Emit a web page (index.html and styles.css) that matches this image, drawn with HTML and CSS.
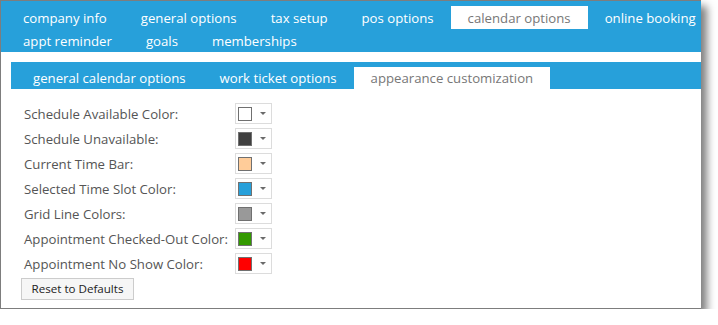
FILE: index.html
```html
<!DOCTYPE html>
<html lang="en">
<head>
    <meta charset="utf-8" />
    <title>Calendar Options</title>
    <link rel="stylesheet" href="styles.css">
</head>
<body>
    <div class="window">
        <!-- onglets principaux -->
        <nav class="mainTabs">
            <div class="tabRow">
                <a class="tab">company info</a>
                <a class="tab">general options</a>
                <a class="tab">tax setup</a>
                <a class="tab">pos options</a>
                <a class="tab active">calendar options</a>
                <a class="tab">online booking</a>
            </div>
            <div class="tabRow">
                <a class="tab">appt reminder</a>
                <a class="tab">goals</a>
                <a class="tab">memberships</a>
            </div>
        </nav>

        <div class="content">
            <nav class="subTabs">
                <a class="subTab">general calendar options</a>
                <a class="subTab">work ticket options</a>
                <a class="subTab active">appearance customization</a>
            </nav>

            <div class="colorForm">
                <div class="colorRow">
                    <label>Schedule Available Color:</label>
                    <span class="picker"><span class="swatch swWhite"></span><span class="caret"></span></span>
                </div>
                <div class="colorRow">
                    <label>Schedule Unavailable:</label>
                    <span class="picker"><span class="swatch swDark"></span><span class="caret"></span></span>
                </div>
                <div class="colorRow">
                    <label>Current Time Bar:</label>
                    <span class="picker"><span class="swatch swPeach"></span><span class="caret"></span></span>
                </div>
                <div class="colorRow">
                    <label>Selected Time Slot Color:</label>
                    <span class="picker"><span class="swatch swBlue"></span><span class="caret"></span></span>
                </div>
                <div class="colorRow">
                    <label>Grid Line Colors:</label>
                    <span class="picker"><span class="swatch swGray"></span><span class="caret"></span></span>
                </div>
                <div class="colorRow">
                    <label>Appointment Checked-Out Color:</label>
                    <span class="picker"><span class="swatch swGreen"></span><span class="caret"></span></span>
                </div>
                <div class="colorRow">
                    <label>Appointment No Show Color:</label>
                    <span class="picker"><span class="swatch swRed"></span><span class="caret"></span></span>
                </div>
                <button type="button" class="resetBtn">Reset to Defaults</button>
            </div>
        </div>
    </div>
</body>
</html>
```

FILE: styles.css
```css
body {
    margin: 0;
    background: #ffffff;
    font-family: "Open Sans", "Noto Sans", sans-serif;
}

.window {
    width: 700px;
    height: 307px;
    border-top: 1px solid #7d7d7d;
    border-left: 1px solid #7d7d7d;
    border-bottom: 1px solid #7d7d7d;
    background: #ffffff;
    box-shadow: 6px 6px 8px rgba(0, 0, 0, 0.5);
}

/* onglets du haut */
.mainTabs {
    background-color: #27a0da;
    padding: 5px 0 0 5px;
    height: 46px;
}

.tabRow {
    display: flex;
    height: 23px;
}

.tab {
    padding: 0 17px 0 17px;
    line-height: 24px;
    font-size: 13.2px;
    color: #ffffff;
    white-space: nowrap;
}

.tab.active {
    background-color: #ffffff;
    color: #777777;
}

.content {
    padding: 10px 0 0 10px;
}

/* sous-onglets */
.subTabs {
    display: flex;
    background-color: #27a0da;
    padding: 5px 0 0 5px;
    height: 22px;
}

.subTab {
    padding: 0 17px;
    line-height: 23px;
    font-size: 13.2px;
    color: #ffffff;
    white-space: nowrap;
}

.subTab.active {
    background-color: #ffffff;
    color: #777777;
}

/* formulaire des couleurs */
.colorForm {
    padding: 12px 0 0 10px;
}

.colorRow {
    display: grid;
    grid-template-columns: 211px auto;
    align-items: center;
    height: 25px;
    padding-left: 3px;
}

.colorRow label {
    font-size: 13.2px;
    color: #555555;
    white-space: nowrap;
}

.picker {
    display: flex;
    align-items: center;
    width: 35px;
    height: 19px;
    border: 1px solid #dcdcdc;
}

.swatch {
    width: 12px;
    height: 12px;
    margin-left: 2px;
    border: 1px solid #707070;
}

.caret {
    margin-left: 8px;
    width: 0;
    height: 0;
    border-left: 3px solid transparent;
    border-right: 3px solid transparent;
    border-top: 3px solid #6a6a6a;
}

.swWhite { background-color: #ffffff; }
.swDark { background-color: #404040; }
.swPeach { background-color: #ffcc99; }
.swBlue { background-color: #27a0da; }
.swGray { background-color: #999999; }
.swGreen { background-color: #339900; }
.swRed { background-color: #ff0000; }

.resetBtn {
    margin-top: 1px;
    width: 113px;
    height: 22px;
    padding: 0;
    font-family: "Open Sans", "Noto Sans", sans-serif;
    font-size: 11.6px;
    color: #222222;
    background-color: #f6f6f6;
    border: 1px solid #cccccc;
}
```
